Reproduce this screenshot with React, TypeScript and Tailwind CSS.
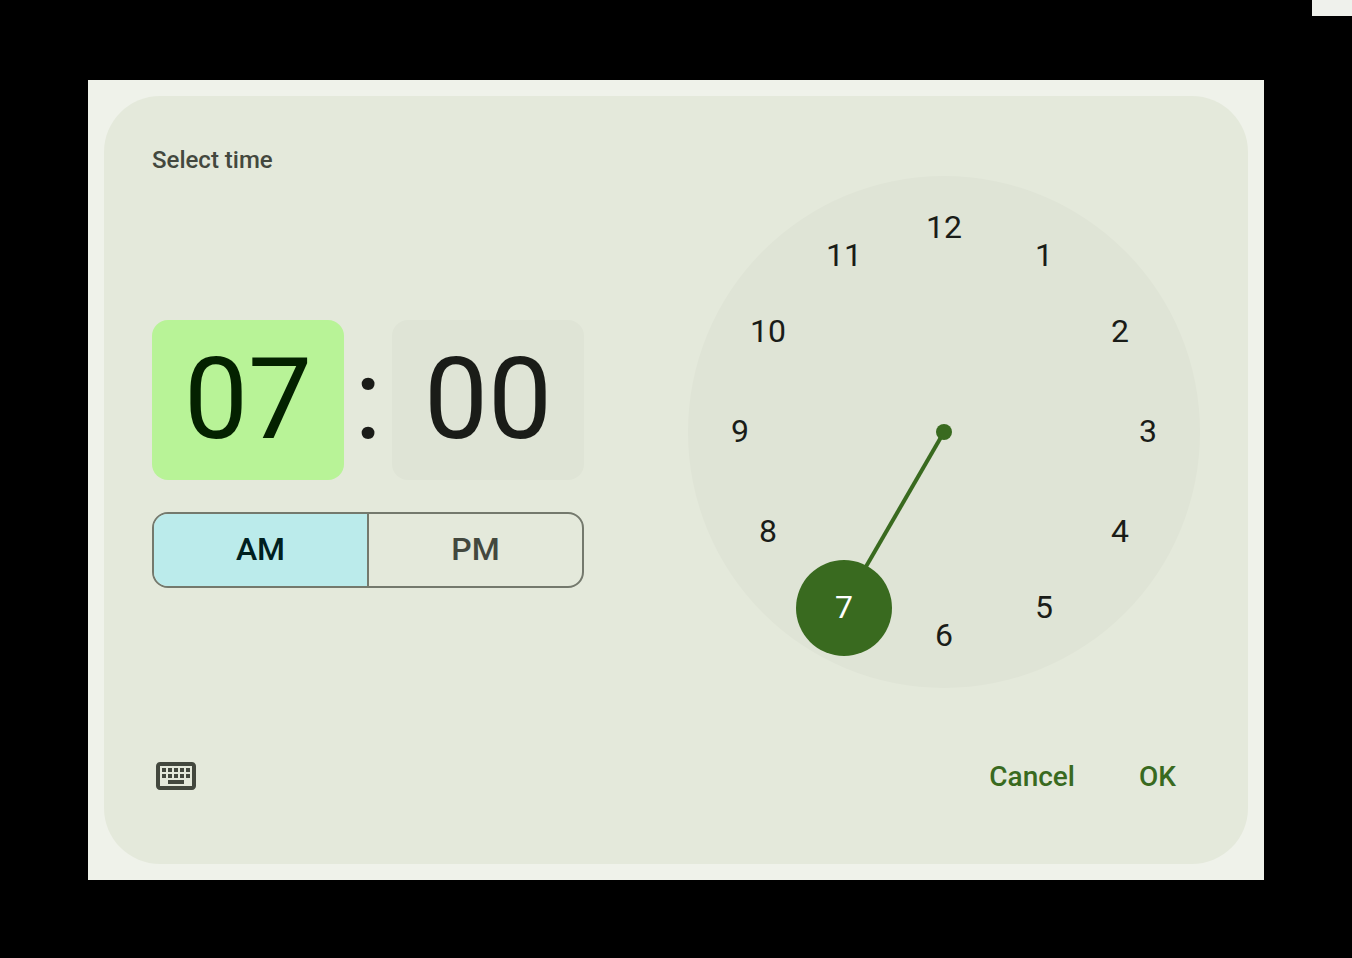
import { useState } from "react";
import { MdOutlineKeyboard } from "react-icons/md";

// Offsets of each hour from the centre of the dial, in dial units (radius 256).
const HOURS = [
  { hour: 12, x: 0, y: -204 },
  { hour: 1, x: 100, y: -176 },
  { hour: 2, x: 176, y: -100 },
  { hour: 3, x: 204, y: 0 },
  { hour: 4, x: 176, y: 100 },
  { hour: 5, x: 100, y: 176 },
  { hour: 6, x: 0, y: 204 },
  { hour: 7, x: -100, y: 176 },
  { hour: 8, x: -176, y: 100 },
  { hour: 9, x: -204, y: 0 },
  { hour: 10, x: -176, y: -100 },
  { hour: 11, x: -100, y: -176 },
];

function TimeField({ label, value, active, onClick }: { label: string; value: string; active: boolean; onClick: () => void }) {
  return (
    <button
      type="button"
      aria-label={label}
      aria-pressed={active}
      onClick={onClick}
      className={
        "flex h-40 w-48 items-center justify-center rounded-2xl pb-0.5 text-[114px] leading-none " +
        (active ? "bg-[#b8f397] text-[#042100]" : "bg-[#dfe4d6] text-[#1a1c18]")
      }
    >
      {value}
    </button>
  );
}

function PeriodToggle() {
  const [period, setPeriod] = useState("AM");
  return (
    <div role="group" aria-label="Period" className="flex h-19 divide-x-2 divide-[#74796d] overflow-hidden rounded-2xl border-2 border-[#74796d]">
      {["AM", "PM"].map((name) => (
        <button
          key={name}
          type="button"
          aria-pressed={period === name}
          onClick={() => setPeriod(name)}
          className={
            "flex-1 pb-0.5 text-[32px] leading-10 font-medium " +
            (period === name ? "bg-[#bbebeb] text-[#002020]" : "text-[#43483e]")
          }
        >
          {name}
        </button>
      ))}
    </div>
  );
}

function ClockDial({ hour, onChange }: { hour: number; onChange: (hour: number) => void }) {
  const selected = HOURS.find((item) => item.hour === hour) ?? HOURS[0];
  return (
    <div className="relative aspect-square w-128 shrink-0 rounded-full bg-[#dfe4d6]">
      <svg viewBox="-256 -256 512 512" className="absolute inset-0 size-full" aria-hidden="true">
        <line x1="0" y1="0" x2={selected.x * 1.02} y2={selected.y} stroke="#396a1f" strokeWidth="4" />
        <circle r="8" fill="#396a1f" />
        <circle cx={selected.x} cy={selected.y} r="48" fill="#396a1f" />
      </svg>
      {HOURS.map((item) => (
        <button
          key={item.hour}
          type="button"
          aria-pressed={item.hour === hour}
          onClick={() => onChange(item.hour)}
          style={{ left: `${50 + item.x / 5.12}%`, top: `${50 + item.y / 5.12}%` }}
          className={
            "absolute flex size-24 -translate-1/2 items-center justify-center rounded-full pb-0.5 text-[32px] leading-10 " +
            (item.hour === hour ? "text-white" : "text-[#1a1c18]")
          }
        >
          {item.hour}
        </button>
      ))}
    </div>
  );
}

export default function App() {
  const [hour, setHour] = useState(7);
  const [field, setField] = useState("hour");
  return (
    <div className="relative min-h-screen bg-black px-22 py-20 pb-19 font-['Roboto',sans-serif]">
      <div className="absolute top-0 right-0 h-4 w-10 bg-[#eff1ec]" />
      <main className="bg-[#eff2ea] p-4">
        <section aria-labelledby="title" className="rounded-[56px] bg-[#e4e9db] p-12">
          <h1 id="title" className="text-2xl leading-8 font-medium text-[#43483e]">
            Select time
          </h1>
          <div className="flex items-start justify-between">
            <div className="flex w-108 shrink-0 flex-col gap-8 pt-36">
              <div className="flex">
                <TimeField label="Hour" value={String(hour).padStart(2, "0")} active={field === "hour"} onClick={() => setField("hour")} />
                <span className="flex w-12 items-center justify-center pb-0.5 text-[114px] leading-none text-[#1a1c18]">:</span>
                <TimeField label="Minute" value="00" active={field === "minute"} onClick={() => setField("minute")} />
              </div>
              <PeriodToggle />
            </div>
            <ClockDial hour={hour} onChange={setHour} />
          </div>
          <footer className="mt-12 flex items-center">
            <button type="button" aria-label="Switch to text input" className="text-[#43483e]">
              <MdOutlineKeyboard size={48} />
            </button>
            <div className="ml-auto flex gap-4 text-[28px] leading-10 font-medium text-[#396a1f]">
              <button type="button" className="h-20 rounded-full px-6 pt-0.5">Cancel</button>
              <button type="button" className="h-20 rounded-full px-6 pt-0.5">OK</button>
            </div>
          </footer>
        </section>
      </main>
    </div>
  );
}
